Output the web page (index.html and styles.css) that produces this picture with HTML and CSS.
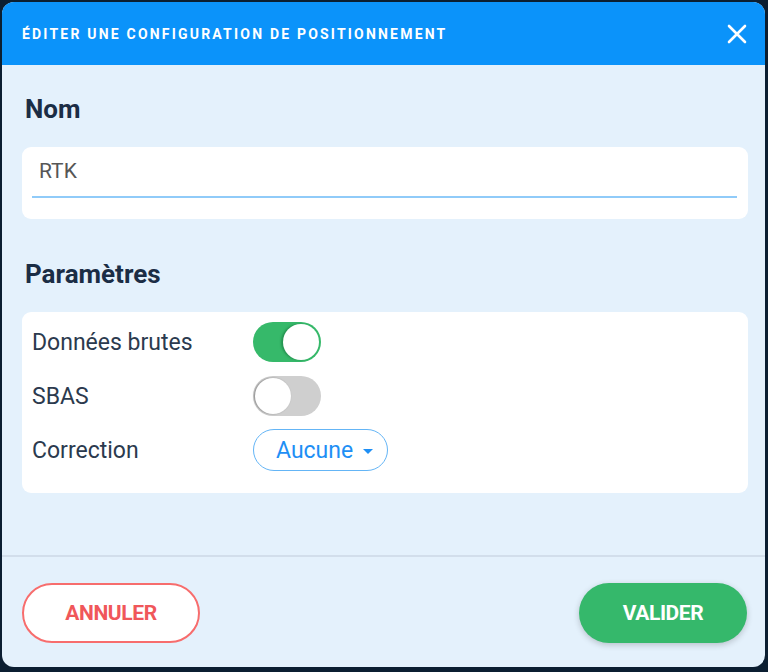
FILE: index.html
```html
<!DOCTYPE html>
<html lang="fr">
<head>
    <meta charset="UTF-8">
    <title>Éditer une configuration de positionnement</title>
    <link rel="stylesheet" href="styles.css">
</head>
<body>
    <div class="dialog">
        <div class="dialog-header">
            <span class="dialog-title">Éditer une configuration de positionnement</span>
            <svg class="close" width="20" height="20" viewBox="0 0 20 20">
                <path d="M2 2 L18 18 M18 2 L2 18" stroke="#fff" stroke-width="2.6" stroke-linecap="round"/>
            </svg>
        </div>

        <div class="dialog-body">
            <h2>Nom</h2>
            <div class="card name-card">
                <div class="field">RTK</div>
            </div>

            <h2 class="params-title">Paramètres</h2>
            <div class="card params">
                <div class="row">
                    <span class="label">Données brutes</span>
                    <span class="toggle on"><span class="knob"></span></span>
                </div>
                <div class="row">
                    <span class="label">SBAS</span>
                    <span class="toggle"><span class="knob"></span></span>
                </div>
                <div class="row">
                    <span class="label">Correction</span>
                    <span class="select">Aucune <span class="caret"></span></span>
                </div>
            </div>
        </div>

        <div class="dialog-footer">
            <button class="btn cancel">Annuler</button>
            <button class="btn ok">Valider</button>
        </div>
    </div>
</body>
</html>
```

FILE: styles.css
```css
html, body {
    margin: 0;
    padding: 0;
}
body {
    background-color: #0b1e31;
    font-family: Roboto, "Liberation Sans", sans-serif;
    width: 768px;
    height: 672px;
    overflow: hidden;
}
.dialog {
    margin: 2px 3px 0 2px;
    height: 665px;
    background-color: #e4f1fc;
    border-radius: 12px;
    overflow: hidden;
    display: flex;
    flex-direction: column;
}
.dialog-header {
    height: 63px;
    flex: none;
    background-color: #0b93fa;
    display: flex;
    align-items: center;
    justify-content: space-between;
    padding: 0 19px 0 20px;
}
.dialog-title {
    color: #fff;
    text-transform: uppercase;
    font-weight: 700;
    font-size: 14px;
    letter-spacing: 2.2px;
    margin-top: 1px;
}
.close {
    display: block;
    margin-right: -1px;
}
.dialog-body {
    flex: 1;
    padding: 30px 17px 0 20px;
}
h2 {
    margin: 0;
    font-size: 26px;
    line-height: 28px;
    font-weight: 700;
    color: #1b2d45;
    padding-left: 3px;
}
.card {
    background: #fff;
    border-radius: 9px;
}
.name-card {
    margin-top: 24px;
    height: 72px;
    padding: 0 11px 0 10px;
    box-sizing: border-box;
}
.field {
    height: 51px;
    border-bottom: 2px solid #90cbf9;
    box-sizing: border-box;
    padding: 10px 0 0 7px;
    font-size: 21px;
    line-height: 28px;
    color: #565656;
}
.params-title {
    margin-top: 41px;
}
.params {
    margin-top: 24px;
    height: 181px;
    box-sizing: border-box;
    padding: 10px 10px 0 10px;
    display: flex;
    flex-direction: column;
    gap: 14px;
}
.row {
    height: 40px;
    display: flex;
    align-items: center;
}
.label {
    width: 221px;
    font-size: 23px;
    color: #2b3a4e;
}
.toggle {
    width: 68px;
    height: 40px;
    border-radius: 20px;
    background: #cfcfcf;
    position: relative;
}
.toggle .knob {
    position: absolute;
    top: 2px;
    left: 2px;
    width: 36px;
    height: 36px;
    border-radius: 50%;
    background: #fff;
    box-shadow: -1px 0 2px rgba(0, 0, 0, 0.35);
}
.toggle.on {
    background: #36b96a;
}
.toggle.on .knob {
    left: 30px;
    box-shadow: -2px 0 2px rgba(20, 110, 55, 0.5);
}
.select {
    height: 42px;
    box-sizing: border-box;
    border: 1.5px solid #64b5f6;
    border-radius: 21px;
    padding: 0 14px 0 22px;
    display: flex;
    align-items: center;
    gap: 10px;
    font-size: 23px;
    color: #1e8ff5;
}
.caret {
    width: 0;
    height: 0;
    border-left: 5px solid transparent;
    border-right: 5px solid transparent;
    border-top: 5px solid #1e8ff5;
    margin-top: 2px;
}
.dialog-footer {
    flex: none;
    border-top: 2px solid #d2deeb;
    padding: 26px 18px 24px 20px;
    display: flex;
    justify-content: space-between;
    align-items: center;
}
.btn {
    height: 60px;
    border-radius: 30px;
    font-family: Roboto, "Liberation Sans", sans-serif;
    font-weight: 700;
    font-size: 21px;
    text-transform: uppercase;
    cursor: pointer;
    letter-spacing: -0.4px;
}
.cancel {
    width: 178px;
    background: #fff;
    border: 2px solid #f76d6d;
    color: #f0575a;
}
.ok {
    width: 168px;
    background: #35b86b;
    border: none;
    color: #fff;
    box-shadow: 0 2px 6px rgba(0, 0, 0, 0.2);
}
```
